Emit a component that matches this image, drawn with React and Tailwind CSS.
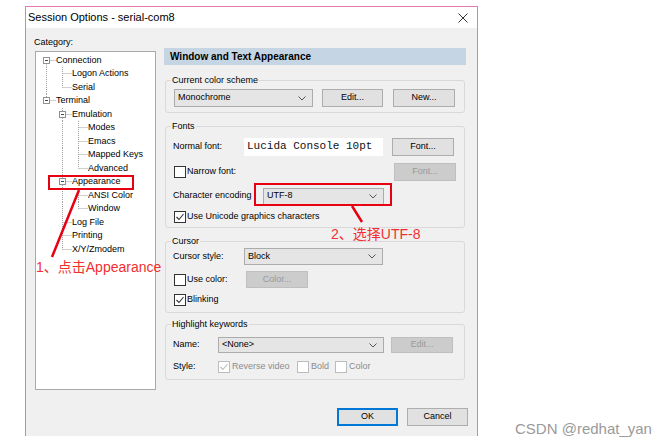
import React from "react";

const treeRows = [
  { label: "Connection", depth: 0, exp: true, cont: [], last: false, first: true },
  { label: "Logon Actions", depth: 1, cont: [true], last: false },
  { label: "Serial", depth: 1, cont: [true], last: true },
  { label: "Terminal", depth: 0, exp: true, cont: [], last: true },
  { label: "Emulation", depth: 1, exp: true, cont: [false], last: false },
  { label: "Modes", depth: 2, cont: [false, true], last: false },
  { label: "Emacs", depth: 2, cont: [false, true], last: false },
  { label: "Mapped Keys", depth: 2, cont: [false, true], last: false },
  { label: "Advanced", depth: 2, cont: [false, true], last: true },
  { label: "Appearance", depth: 1, exp: true, cont: [false], last: false },
  { label: "ANSI Color", depth: 2, cont: [false, true], last: false },
  { label: "Window", depth: 2, cont: [false, true], last: true },
  { label: "Log File", depth: 1, cont: [false], last: false },
  { label: "Printing", depth: 1, cont: [false], last: false },
  { label: "X/Y/Zmodem", depth: 1, cont: [false], last: true },
];

function TreeLines({ row }) {
  const w = (row.depth + 1) * 16;
  const h = 13.5;
  const mid = 6.5;
  const cx = (k) => 7.5 + 16 * k;
  const me = cx(row.depth);
  return (
    <svg width={w} height={h} className="shrink-0 overflow-visible">
      <g stroke="#a0a0a0" strokeWidth="1" strokeDasharray="1 1">
        {row.cont.map((c, k) => (c ? <line key={k} x1={cx(k)} y1={0} x2={cx(k)} y2={h} /> : null))}
        <line x1={me} y1={row.first ? mid : 0} x2={me} y2={row.last ? mid : h} />
        <line x1={me} y1={mid} x2={me + 9} y2={mid} />
      </g>
      {row.exp && (
        <g>
          <rect x={me - 3} y={mid - 3} width="6" height="6" fill="#fff" stroke="#919191" />
          <line x1={me - 1.5} y1={mid} x2={me + 1.5} y2={mid} stroke="#3b4a66" />
        </g>
      )}
    </svg>
  );
}

function Check({ checked, disabled }) {
  const c = disabled ? "#bcbcbc" : "#333333";
  return (
    <span
      className={`w-[12px] h-[12px] border bg-white flex items-center justify-center shrink-0 ${
        disabled ? "border-[#bcbcbc]" : "border-[#333333]"
      }`}
    >
      {checked && (
        <svg width="10" height="10" viewBox="0 0 10 10">
          <path d="M1.5 5 L4 7.5 L8.5 2" fill="none" stroke={c} strokeWidth="1.1" />
        </svg>
      )}
    </span>
  );
}

function Select({ value, className }) {
  return (
    <div
      className={`border border-[#acacac] bg-[#e5e5e5] flex items-center justify-between pl-[3px] pr-[6px] ${className}`}
    >
      <span>{value}</span>
      <svg width="8" height="5" viewBox="0 0 8 5">
        <path d="M0.5 0.5 L4 4 L7.5 0.5" fill="none" stroke="#555" />
      </svg>
    </div>
  );
}

function Btn({ children, disabled, className }) {
  return (
    <div
      className={`flex items-center justify-center border shrink-0 ${
        disabled
          ? "bg-[#cccccc] border-[#bfbfbf] text-[#9a9a9a]"
          : "bg-[#e1e1e1] border-[#adadad]"
      } ${className}`}
    >
      {children}
    </div>
  );
}

function Group({ title, className, children }) {
  return (
    <fieldset className={`mx-[1px] border border-[#d9d9d9] rounded-[3px] px-[8px] ${className}`}>
      <legend className="text-[9px] leading-[11px] ml-[-3px] px-[1px]">{title}</legend>
      {children}
    </fieldset>
  );
}

export default function App() {
  return (
    <div className="w-[666px] h-[445px] bg-white relative overflow-hidden pt-[6px] pl-[25px] font-['Liberation_Sans',Arial,sans-serif] text-black">
      <div className="w-[453px] h-[430px] border border-b-0 border-[#e27ab9] flex flex-col">
        {/* title bar */}
        <div className="h-[21px] bg-white flex items-center justify-between pl-[2px] pr-[9px]">
          <span className="text-[11px]">Session Options - serial-com8</span>
          <svg width="10" height="10" viewBox="0 0 10 10">
            <path d="M0.5 0.5 L9.5 9.5 M9.5 0.5 L0.5 9.5" stroke="#333" strokeWidth="1" />
          </svg>
        </div>

        <div className="flex-1 bg-[#f0f0f0] flex flex-col text-[9px]">
          <div className="flex items-start pl-[9px]">
            {/* category tree */}
            <div className="flex flex-col pt-[8.5px]">
              <span className="leading-[11px] ml-[-1px]">Category:</span>
              <div className="mt-[3.5px] w-[121px] h-[339px] bg-white border border-[#a9a9a9] pt-[1.5px] pl-[3px]">
                {treeRows.map((row) => (
                  <div key={row.label} className="flex items-center h-[13.5px]">
                    <TreeLines row={row} />
                    <span className="ml-[1px] leading-[13px]">{row.label}</span>
                  </div>
                ))}
              </div>
            </div>

            {/* settings panel */}
            <div className="ml-[8px] w-[302px] pt-[20px] flex flex-col">
              <div className="h-[17px] bg-[#c5d5e3] pl-[6px] flex items-center text-[10px] font-bold">
                Window and Text Appearance
              </div>

              <Group title="Current color scheme" className="mt-[9.5px] pt-[3.5px] pb-[5px]">
                <div className="flex items-center">
                  <Select value="Monochrome" className="w-[139px] h-[18px]" />
                  <Btn className="ml-[9px] w-[61px] h-[18px]">Edit...</Btn>
                  <Btn className="ml-[10px] w-[62px] h-[18px]">New...</Btn>
                </div>
              </Group>

              <Group title="Fonts" className="mt-[8px] pt-[5.5px] pb-[4.5px]">
                <div className="flex items-center h-[18px]">
                  <span className="w-[71px] ml-[-1px]">Normal font:</span>
                  <div className="w-[139px] h-[18px] bg-white flex items-center pl-[3px] font-['Liberation_Mono',monospace] text-[11px] text-[#111]">
                    Lucida Console 10pt
                  </div>
                  <Btn className="ml-[9px] w-[62px] h-[18px]">Font...</Btn>
                </div>
                <div className="flex items-center h-[18px] mt-[7px]">
                  <Check />
                  <span className="ml-[1px]">Narrow font:</span>
                  <Btn disabled className="ml-auto w-[62px] h-[18px]">
                    Font...
                  </Btn>
                </div>
                <div className="flex items-center h-[17px] mt-[7px]">
                  <span className="w-[90px] ml-[-1px]">Character encoding</span>
                  <Select value="UTF-8" className="w-[121px] h-[17px]" />
                </div>
                <div className="flex items-center h-[12px] mt-[6px]">
                  <Check checked />
                  <span className="ml-[1px]">Use Unicode graphics characters</span>
                </div>
              </Group>

              <Group title="Cursor" className="mt-[7.5px] pt-[1.5px] pb-[6px]">
                <div className="flex items-center h-[17px]">
                  <span className="w-[71px] ml-[-1px]">Cursor style:</span>
                  <Select value="Block" className="w-[139px] h-[17px]" />
                </div>
                <div className="flex items-center h-[17px] mt-[6px]">
                  <Check />
                  <span className="ml-[1px] w-[59px]">Use color:</span>
                  <Btn disabled className="w-[62px] h-[17px]">
                    Color...
                  </Btn>
                </div>
                <div className="flex items-center h-[12px] mt-[6px]">
                  <Check checked />
                  <span className="ml-[1px]">Blinking</span>
                </div>
              </Group>

              <Group title="Highlight keywords" className="mt-[6px] pt-[7px] pb-[5.5px]">
                <div className="flex items-center h-[16px]">
                  <span className="w-[45px] ml-[-1px]">Name:</span>
                  <Select value="<None>" className="w-[166px] h-[16px]" />
                  <Btn disabled className="ml-[7px] w-[62px] h-[16px]">
                    Edit...
                  </Btn>
                </div>
                <div className="flex items-center h-[12px] mt-[8px]">
                  <span className="w-[45px] ml-[-1px]">Style:</span>
                  <div className="w-[79px] flex items-center">
                    <Check checked disabled />
                    <span className="ml-[2px] text-[#8c8c8c]">Reverse video</span>
                  </div>
                  <div className="w-[38px] flex items-center">
                    <Check disabled />
                    <span className="ml-[2px] text-[#8c8c8c]">Bold</span>
                  </div>
                  <div className="flex items-center">
                    <Check disabled />
                    <span className="ml-[2px] text-[#8c8c8c]">Color</span>
                  </div>
                </div>
              </Group>
            </div>
          </div>

          <div className="mt-auto mb-[10px] flex justify-end gap-[9px] pr-[9px]">
            <Btn className="w-[61px] h-[18px] !border-[#0078d7] shadow-[inset_0_0_0_1px_#0078d7]">OK</Btn>
            <Btn className="w-[61px] h-[18px]">Cancel</Btn>
          </div>
        </div>
      </div>

      {/* annotations */}
      <div className="absolute left-[48px] top-[175px] w-[86px] h-[15px] border-2 border-[#e60012]" />
      <div className="absolute left-[254px] top-[183px] w-[138px] h-[23px] border-2 border-[#e60012]" />
      <svg className="absolute left-0 top-0" width="666" height="445">
        <line x1="79" y1="190" x2="52" y2="257" stroke="#e60012" strokeWidth="2.5" />
        <line x1="352" y1="206" x2="362" y2="222" stroke="#e60012" strokeWidth="2.5" />
      </svg>
      <div className="absolute left-[36px] top-[258px] text-[14px] leading-[18px] text-[#f03030] font-['Liberation_Sans','Noto_Sans_CJK_SC',sans-serif]">
        1、点击Appearance
      </div>
      <div className="absolute left-[331px] top-[225px] text-[14px] leading-[18px] text-[#f03030] font-['Liberation_Sans','Noto_Sans_CJK_SC',sans-serif]">
        2、选择UTF-8
      </div>
      <div className="absolute left-[515px] top-[420px] text-[15px] leading-[18px] text-[#9a9a9a]">
        CSDN @redhat_yan
      </div>
    </div>
  );
}
